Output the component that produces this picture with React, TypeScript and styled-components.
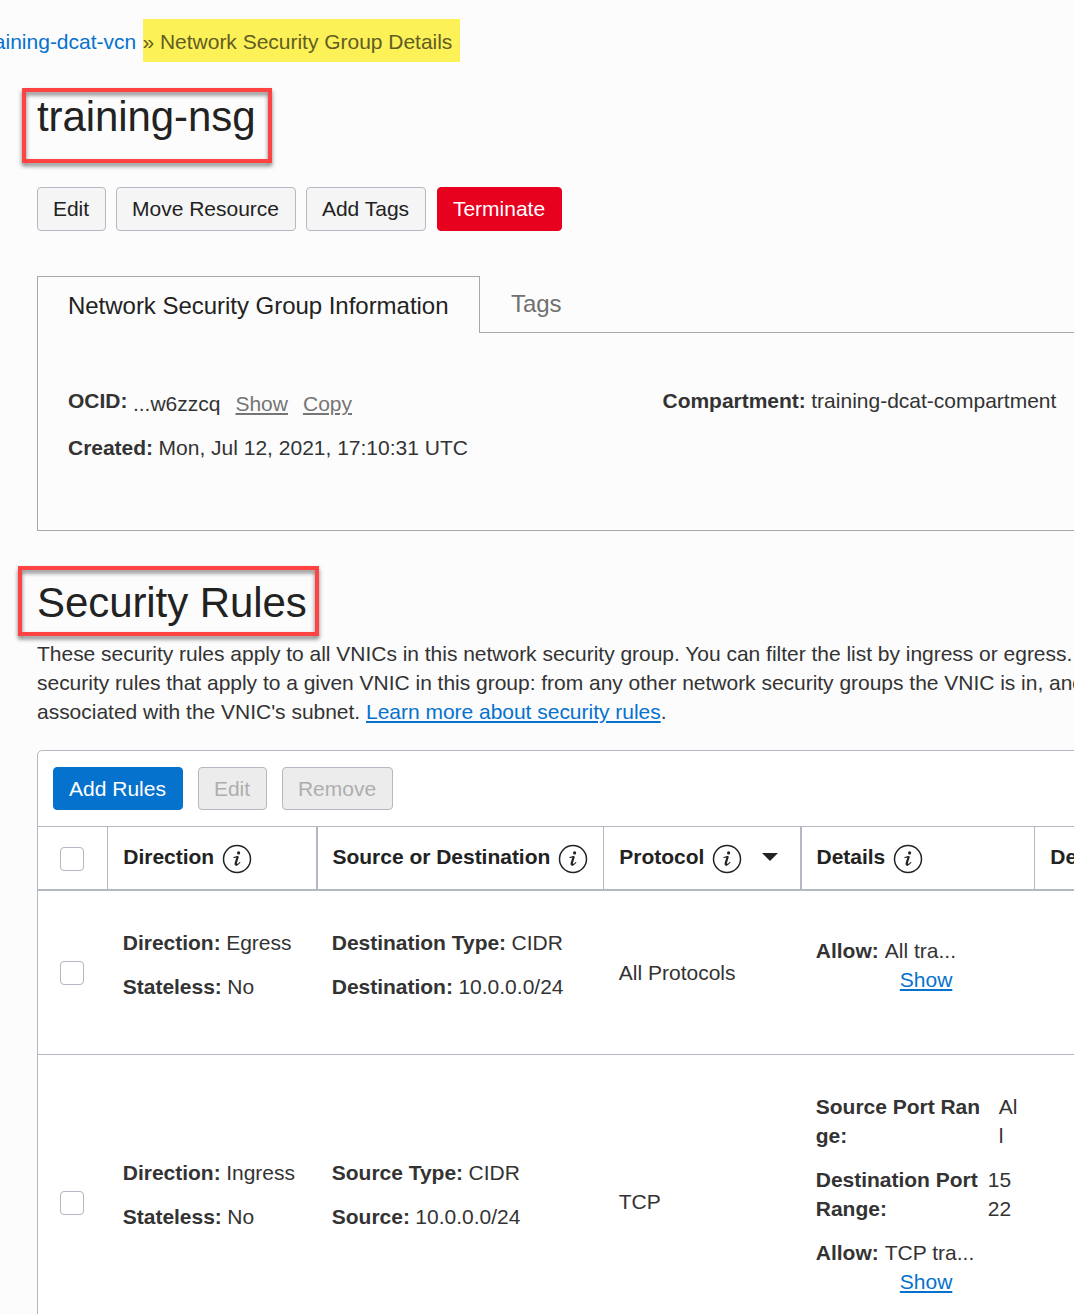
import React from "react";
import styled, { createGlobalStyle, css } from "styled-components";

const GlobalStyle = createGlobalStyle`
  *, *::before, *::after { box-sizing: border-box; }
  body {
    margin: 0;
    background: #fcfcfc;
    color: #333;
    font: 21px/29px "Liberation Sans", Arial, Helvetica, sans-serif;
  }
  b { letter-spacing: -0.02px; }
`;

const Page = styled.main`
  position: relative;
  width: 1074px;
  height: 1314px;
  overflow: hidden;
  padding-top: 19px;
`;

const Breadcrumb = styled.nav`
  display: flex;
  height: 43px;
  margin-left: -19px;
  line-height: 45px;
  white-space: nowrap;
`;

const CrumbLink = styled.a`
  width: 162px;
  color: #0572ce;
`;

const CurrentCrumb = styled.span`
  width: 317px;
  text-indent: -0.5px;
  letter-spacing: -0.02px;
  background: #fdf158;
  color: #615d24;
`;

const Heading = styled.h1<{ $lineHeight: number }>`
  margin: 0;
  font-size: 42px;
  line-height: ${(p) => p.$lineHeight}px;
  font-weight: 400;
  letter-spacing: -0.08px;
  color: #222;
`;

const Content = styled.div`
  width: 1240px;
  margin: 30px 0 0 37px;
`;

const Actions = styled.div`
  display: flex;
  gap: 10px;
  margin-top: 45px;
`;

const Button = styled.button<{ $kind?: "danger" | "primary"; $width: number; $height?: number }>`
  width: ${(p) => p.$width}px;
  height: ${(p) => p.$height ?? 44}px;
  padding: 0 1px ${(p) => (p.$height ? 0 : 2)}px 0;
  font: inherit;
  white-space: nowrap;
  color: #222;
  background: #f5f5f5;
  border: 1px solid #b3b8c3;
  border-radius: 4px;
  &:disabled {
    color: #aeaeae;
    background: #ececec;
  }
  ${(p) =>
    p.$kind &&
    css`
      color: #fff;
      background: ${p.$kind === "danger" ? "#e8001f" : "#0572ce"};
      border-color: ${p.$kind === "danger" ? "#e8001f" : "#0572ce"};
    `}
`;

const TerminateButton = styled(Button)`
  margin-left: 1px;
`;

const Tabs = styled.div`
  display: flex;
  height: 57px;
  margin-top: 45px;
  font-size: 24px;
  letter-spacing: -0.03px;
`;

const ActiveTab = styled.div`
  width: 443px;
  padding: 14px 0 0 30px;
  border: 1px solid #a8a8a8;
  border-bottom: 0;
  color: #222;
  white-space: nowrap;
`;

const Tab = styled.div`
  flex: 1;
  padding: 13px 0 0 31px;
  border-bottom: 1px solid #a8a8a8;
  color: #707070;
`;

const InfoPanel = styled.section`
  display: grid;
  grid-template-columns: 594.5px 1fr;
  height: 198px;
  padding: 53px 0 0 30px;
  border: 1px solid #a8a8a8;
  border-top: 0;
`;

const Facts = styled.div`
  display: flex;
  flex-direction: column;
  gap: 18px;
`;

const Fact = styled.div`
  display: flex;
  gap: 5.5px;
`;

const OcidValue = styled.span`
  display: flex;
  gap: 15px;
  padding-top: 3px;
  margin-bottom: -3px;
`;

const Link = styled.a<{ $muted?: boolean }>`
  color: ${(p) => (p.$muted ? "#757575" : "#0572ce")};
  text-decoration: underline;
  text-decoration-thickness: 2px;
  text-underline-offset: 2px;
`;

const RulesSection = styled.section`
  margin-top: 47px;
`;

const Description = styled.p`
  margin: 12px 0 24px;
  letter-spacing: -0.02px;
  white-space: nowrap;
`;

const TableCard = styled.div`
  background: #fff;
  border: 1px solid #b3b8c3;
  border-radius: 5px;
`;

const Toolbar = styled.div`
  display: flex;
  gap: 15px;
  height: 75px;
  padding: 16px 15px;
`;

const columns = "69px 209px 287px 197px 234px 1fr";

const HeaderRow = styled.div`
  display: grid;
  grid-template-columns: ${columns};
  height: 65px;
  border-top: 1px solid #b3b8c3;
  border-bottom: 2px solid #b3b8c3;
`;

const HeaderCell = styled.div<{ $edge?: number }>`
  display: flex;
  align-items: flex-start;
  padding: 15px 0 0 ${(p) => (p.$edge ? 14.5 : 15.3)}px;
  border-left: ${(p) => p.$edge ?? 1}px solid #b3b8c3;
  color: #222;
  font-weight: 700;
  letter-spacing: -0.02px;
  white-space: nowrap;
`;

const CheckCell = styled.div`
  display: flex;
  align-items: center;
  padding: 1px 0 0 22px;
`;

const Checkbox = styled.span`
  width: 24px;
  height: 24px;
  border: 1px solid #b3b8c3;
  border-radius: 4px;
  background: #fff;
`;

const Row = styled.div<{ $height: number }>`
  display: grid;
  grid-template-columns: ${columns};
  align-items: center;
  height: ${(p) => p.$height}px;
  border-bottom: 1px solid #b3b8c3;
`;

const Cell = styled.div`
  display: flex;
  flex-direction: column;
  gap: 15px;
  padding: 0 0 16px 15.8px;
  white-space: nowrap;
`;

const PlainCell = styled.div`
  padding: 0 0 1px 15.8px;
`;

const RangeFact = styled.div<{ $labelWidth: number }>`
  display: grid;
  grid-template-columns: ${(p) => p.$labelWidth}px 30px;
`;

const AllowFact = styled.div`
  display: grid;
  grid-template-columns: 63px 84px;
  column-gap: 6px;
`;

const ShowLink = styled(Link)`
  grid-column: 2;
  padding-left: 15px;
`;

const InfoSvg = styled.svg`
  flex: none;
  width: 30px;
  height: 30px;
  margin: 2px 0 0 7.6px;
`;

const CaretSvg = styled.svg`
  width: 16px;
  height: 8px;
  margin: 11px 0 0 20px;
`;

const HighlightFrame = styled.div<{ $x: number; $y: number; $w: number; $h: number }>`
  position: absolute;
  left: ${(p) => p.$x}px;
  top: ${(p) => p.$y}px;
  width: ${(p) => p.$w}px;
  height: ${(p) => p.$h}px;
  border: 4px solid #ff4343;
  filter: drop-shadow(0 3px 2px rgba(0, 0, 0, 0.5));
  pointer-events: none;
`;

const InfoIcon = () => (
  <InfoSvg viewBox="0 0 30 30" fill="none" stroke="#222">
    <circle cx="15" cy="15" r="13.5" strokeWidth="1.5" />
    <circle cx="16.6" cy="8.9" r="1.6" fill="#222" stroke="none" />
    <path d="M11.8 13.5c1.4-.2 2.5-.5 3.8-.9" strokeWidth="1.1" strokeLinecap="round" />
    <path d="M15.6 13.1l-1.9 6.2c-.3 1.2.2 1.6 1 1" strokeWidth="2.2" strokeLinecap="round" />
    <path d="M14.4 20.9c1.4-.2 2.6-1.1 3.4-2.4" strokeWidth="1.1" strokeLinecap="round" />
  </InfoSvg>
);

const Caret = () => (
  <CaretSvg viewBox="0 0 16 8">
    <path d="M0 0h16L8 8z" fill="#222" />
  </CaretSvg>
);

const Pair = ({ label, value }: { label: string; value: string }) => (
  <Fact>
    <b>{label}:</b>
    <span>{value}</span>
  </Fact>
);

const Allow = ({ value }: { value: string }) => (
  <AllowFact>
    <b>Allow:</b>
    <span>{value}</span>
    <ShowLink>Show</ShowLink>
  </AllowFact>
);

export default function App() {
  return (
    <Page>
      <GlobalStyle />
      <Breadcrumb>
        <CrumbLink>training-dcat-vcn</CrumbLink>
        <CurrentCrumb>» Network Security Group Details</CurrentCrumb>
      </Breadcrumb>

      <Content>
        <Heading $lineHeight={50}>training-nsg</Heading>
        <Actions>
          <Button $width={69}>Edit</Button>
          <Button $width={180}>Move Resource</Button>
          <Button $width={120}>Add Tags</Button>
          <TerminateButton $width={125} $kind="danger">Terminate</TerminateButton>
        </Actions>

        <Tabs>
          <ActiveTab>Network Security Group Information</ActiveTab>
          <Tab>Tags</Tab>
        </Tabs>
        <InfoPanel>
          <Facts>
            <Fact>
              <b>OCID:</b>
              <OcidValue>
                <span>...w6zzcq</span>
                <Link $muted>Show</Link>
                <Link $muted>Copy</Link>
              </OcidValue>
            </Fact>
            <Pair label="Created" value="Mon, Jul 12, 2021, 17:10:31 UTC" />
          </Facts>
          <Facts>
            <Pair label="Compartment" value="training-dcat-compartment" />
          </Facts>
        </InfoPanel>

        <RulesSection>
          <Heading as="h2" $lineHeight={49}>Security Rules</Heading>
          <Description>
            These security rules apply to all VNICs in this network security group. You can filter the list by ingress or egress.
            <br />
            security rules that apply to a given VNIC in this group: from any other network security groups the VNIC is in, and
            <br />
            associated with the VNIC's subnet. <Link>Learn more about security rules</Link>.
          </Description>

          <TableCard>
            <Toolbar>
              <Button $width={130} $height={43} $kind="primary">Add Rules</Button>
              <Button $width={69} $height={43} disabled>Edit</Button>
              <Button $width={111} $height={43} disabled>Remove</Button>
            </Toolbar>
            <HeaderRow>
              <CheckCell><Checkbox /></CheckCell>
              <HeaderCell>Direction<InfoIcon /></HeaderCell>
              <HeaderCell $edge={2}>Source or Destination<InfoIcon /></HeaderCell>
              <HeaderCell>Protocol<InfoIcon /><Caret /></HeaderCell>
              <HeaderCell $edge={2}>Details<InfoIcon /></HeaderCell>
              <HeaderCell>Description</HeaderCell>
            </HeaderRow>
            <Row $height={164}>
              <CheckCell><Checkbox /></CheckCell>
              <Cell>
                <Pair label="Direction" value="Egress" />
                <Pair label="Stateless" value="No" />
              </Cell>
              <Cell>
                <Pair label="Destination Type" value="CIDR" />
                <Pair label="Destination" value="10.0.0.0/24" />
              </Cell>
              <PlainCell>All Protocols</PlainCell>
              <Cell>
                <Allow value="All tra..." />
              </Cell>
            </Row>
            <Row $height={295}>
              <CheckCell><Checkbox /></CheckCell>
              <Cell>
                <Pair label="Direction" value="Ingress" />
                <Pair label="Stateless" value="No" />
              </Cell>
              <Cell>
                <Pair label="Source Type" value="CIDR" />
                <Pair label="Source" value="10.0.0.0/24" />
              </Cell>
              <PlainCell>TCP</PlainCell>
              <Cell>
                <RangeFact $labelWidth={183}>
                  <b>Source Port Ran<br />ge:</b>
                  <span>Al<br />l</span>
                </RangeFact>
                <RangeFact $labelWidth={172}>
                  <b>Destination Port<br />Range:</b>
                  <span>15<br />22</span>
                </RangeFact>
                <Allow value="TCP tra..." />
              </Cell>
            </Row>
          </TableCard>
        </RulesSection>
      </Content>

      <HighlightFrame $x={22} $y={88} $w={250} $h={75} />
      <HighlightFrame $x={18} $y={566} $w={301} $h={70} />
    </Page>
  );
}
